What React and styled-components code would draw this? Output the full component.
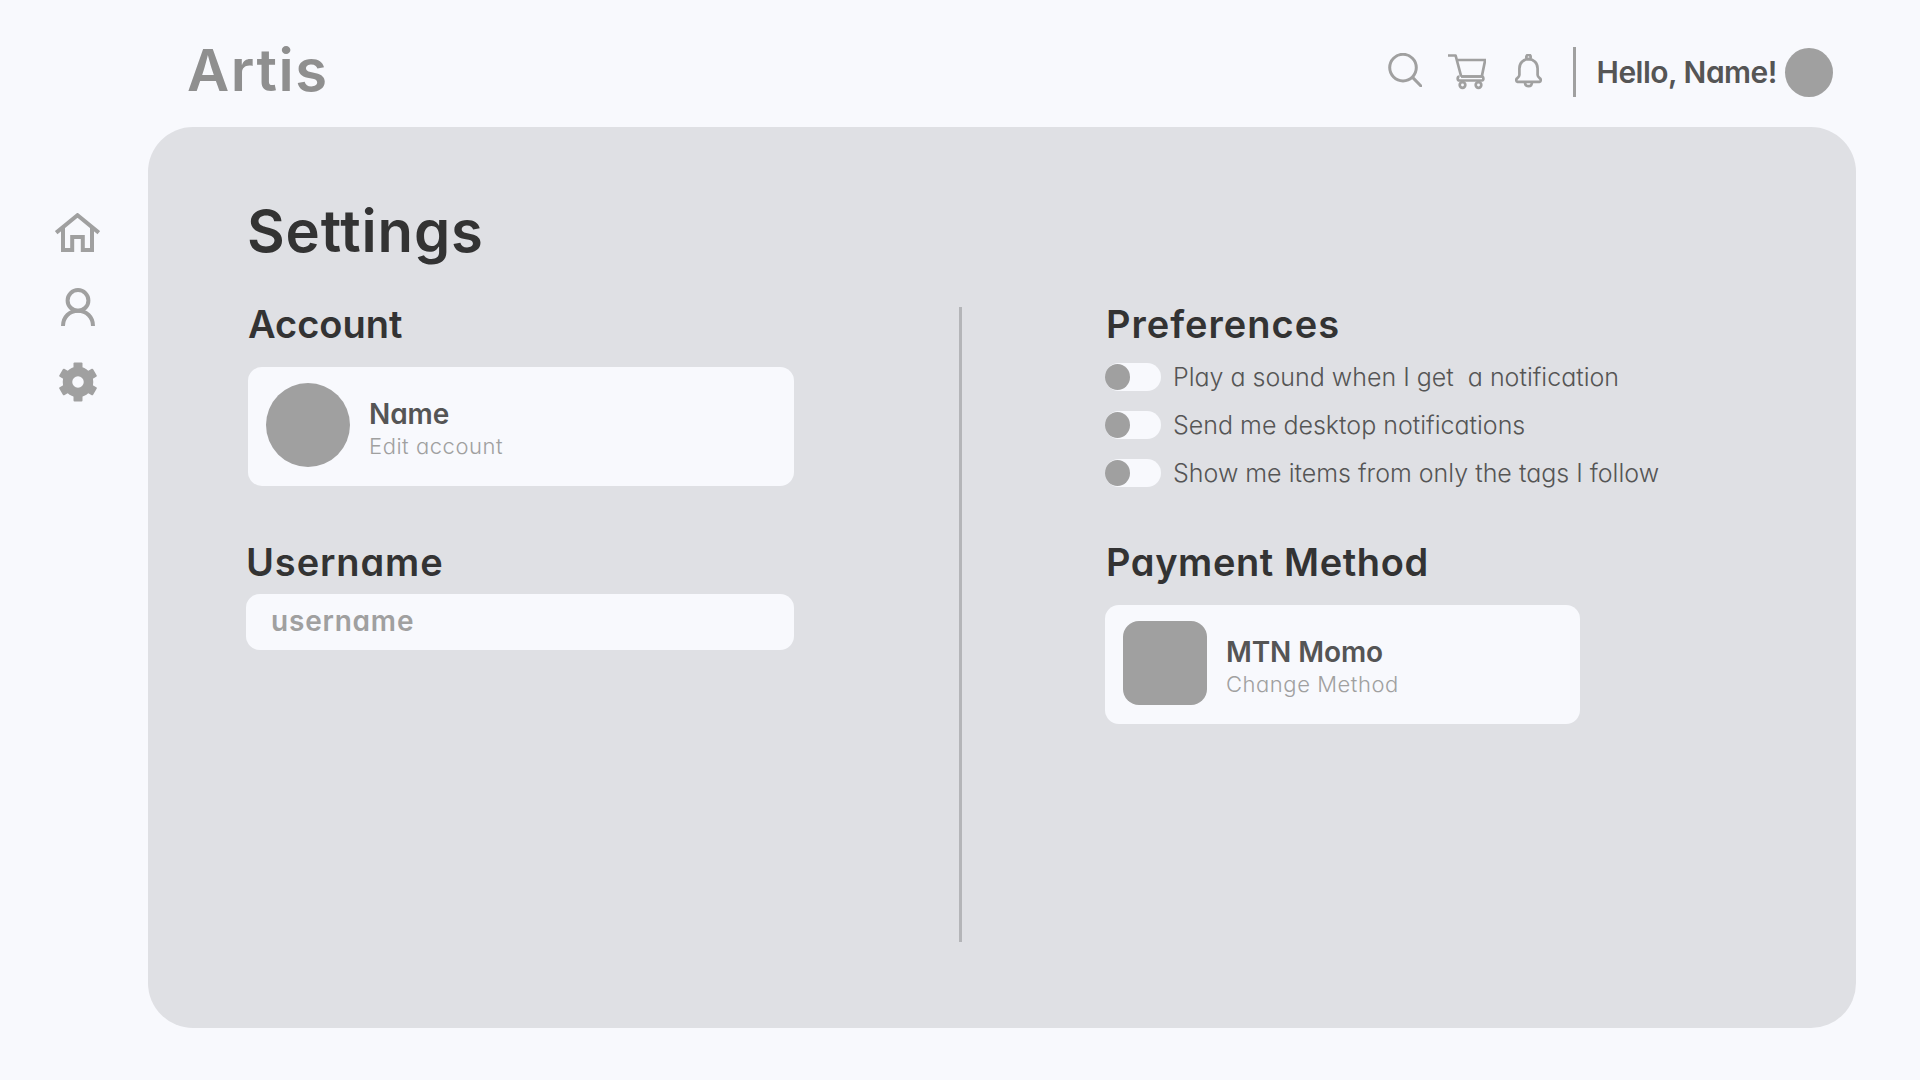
import React from 'react';
import styled, { createGlobalStyle } from 'styled-components';

const GlobalStyle = createGlobalStyle`
  html, body {
    margin: 0;
    padding: 0;
    background: #f8f9fd;
  }
  body {
    font-family: Inter, "Noto Sans", "Liberation Sans", sans-serif;
    font-feature-settings: "cv11" 1;
  }
  * {
    box-sizing: border-box;
  }
`;

const Page = styled.div`
  width: 1920px;
  height: 1080px;
  overflow: hidden;
  background: #f8f9fd;
`;

const Header = styled.header`
  height: 127px;
  padding: 41px 87px 0 187px;
  display: flex;
  justify-content: space-between;
  align-items: flex-start;
`;

const Logo = styled.div`
  font-size: 58px;
  line-height: 58px;
  font-weight: 600;
  letter-spacing: 1.6px;
  color: #8f8f8f;
`;

const HeaderTools = styled.div`
  height: 62px;
  display: flex;
  align-items: center;
`;

const ToolIcon = styled.svg`
  display: block;
  flex: none;
  margin-left: ${({ $gap }) => $gap || 0}px;
  margin-bottom: ${({ $lift }) => ($lift || 0) * 2}px;
  fill: none;
  stroke: #a0a0a0;
  stroke-width: ${({ $weight }) => $weight || 2.7};
`;

const ToolDivider = styled.div`
  width: 3px;
  height: 50px;
  margin: 0 21px 0 31px;
  background: #a0a0a0;
`;

const Greeting = styled.div`
  font-size: 30px;
  line-height: 36px;
  font-weight: 600;
  letter-spacing: -0.5px;
  color: #555555;
  white-space: nowrap;
`;

const HeaderAvatar = styled.div`
  width: 48px;
  height: 49px;
  margin-left: 8px;
  border-radius: 50%;
  background: #a0a0a0;
`;

const Body = styled.div`
  display: flex;
  align-items: flex-start;
`;

const Sidebar = styled.nav`
  width: 148px;
  padding: 86px 0 0 7px;
  display: flex;
  flex-direction: column;
  align-items: center;
  gap: 36px;
`;

const NavIcon = styled.svg`
  display: block;
  fill: none;
  stroke: #a0a0a0;
  stroke-width: 4;
`;

const Panel = styled.main`
  width: 1708px;
  height: 901px;
  padding: 75px 0 0 100px;
  border-radius: 45px;
  background: #dfe0e4;
`;

const Title = styled.h1`
  margin: 0 0 47px -1px;
  font-size: 58px;
  line-height: 58px;
  font-weight: 600;
  letter-spacing: 0.85px;
  color: #333333;
`;

const Columns = styled.div`
  height: 635px;
  display: flex;
  align-items: stretch;
`;

const LeftColumn = styled.section`
  width: 546px;
  margin-right: 165px;
`;

const ColumnRule = styled.div`
  width: 3px;
  margin-right: 143px;
  background: #b4b5b8;
`;

const RightColumn = styled.section`
  width: 600px;
`;

const Heading = styled.h2`
  margin: ${({ $top }) => $top || 0}px 0 ${({ $bottom }) => $bottom}px ${({ $indent }) => $indent || 0}px;
  font-size: 38px;
  line-height: 34px;
  font-weight: 600;
  letter-spacing: ${({ $track }) => $track}px;
  color: #333333;
`;

const Card = styled.div`
  width: ${({ $width }) => $width}px;
  height: 119px;
  padding: 0 18px 3px;
  display: flex;
  align-items: center;
  gap: 19px;
  border-radius: 14px;
  background: #f8f9fd;
`;

const Thumb = styled.div`
  width: 84px;
  height: 84px;
  flex: none;
  border-radius: ${({ $round }) => ($round ? '50%' : '16px')};
  background: #a0a0a0;
`;

const CardText = styled.div`
  margin-top: 7px;
`;

const CardTitle = styled.div`
  font-size: 28px;
  line-height: 32px;
  font-weight: 600;
  letter-spacing: -0.1px;
  color: #555555;
`;

const CardHint = styled.div`
  margin-top: 3px;
  font-size: 22px;
  line-height: 26px;
  font-weight: 300;
  letter-spacing: 0.55px;
  color: #a0a0a0;
`;

const UsernameField = styled.div`
  width: 548px;
  height: 56px;
  margin-left: -2px;
  padding: 0 25px 2px;
  display: flex;
  align-items: center;
  border-radius: 14px;
  background: #f8f9fd;
  font-size: 28px;
  font-weight: 600;
  letter-spacing: 0.8px;
  color: #a0a0a0;
`;

const ToggleList = styled.div`
  display: flex;
  flex-direction: column;
  gap: 20px;
`;

const ToggleRow = styled.label`
  height: 28px;
  display: flex;
  align-items: center;
  gap: 12px;
  font-size: 25px;
  line-height: 28px;
  font-weight: 300;
  color: #555555;
  white-space: pre;
`;

const ToggleTrack = styled.span`
  width: 56px;
  height: 28px;
  flex: none;
  display: flex;
  align-items: center;
  border-radius: 14px;
  background: #f8f9fd;
`;

const ToggleKnob = styled.span`
  width: 25px;
  height: 26px;
  border-radius: 50%;
  background: #a0a0a0;
`;

const preferences = [
  'Play a sound when I get  a notification',
  'Send me desktop notifications',
  'Show me items from only the tags I follow',
];

const Toggle = ({ label }) => (
  <ToggleRow>
    <ToggleTrack>
      <ToggleKnob />
    </ToggleTrack>
    {label}
  </ToggleRow>
);

const SearchIcon = () => (
  <ToolIcon $lift={2} $weight={3} width="34" height="34" viewBox="0 0 34 34">
    <circle cx="15" cy="14.6" r="13.3" />
    <path d="M24.8 24.6 33 33" strokeLinecap="round" />
  </ToolIcon>
);

const CartIcon = () => (
  <ToolIcon $gap={26} width="38" height="36" viewBox="0 0 38 36">
    <path d="M0 1.5h7.6l5.6 21M8.6 6h28.6l-3.4 16.5H13.2" strokeLinejoin="round" />
    <path d="M13 22.5h21c1.6 0 2 4 0 4H11.5c-2.4 0-2.4-4 0-4" strokeLinejoin="round" />
    <circle cx="14.5" cy="31" r="2.8" />
    <circle cx="30.5" cy="31" r="2.8" />
  </ToolIcon>
);

const BellIcon = () => (
  <ToolIcon $gap={29} $lift={1} width="27" height="34" viewBox="0 0 27 34">
    <circle cx="13.5" cy="3" r="2.2" />
    <path d="M4.4 21V14.5C4.4 9 8.4 5.2 13.5 5.2S22.6 9 22.6 14.5V21c0 1.6 1.4 2.6 2.6 3.6.8.7.8 3.2-.6 3.2H2.4c-1.4 0-1.4-2.5-.6-3.2C3 23.6 4.4 22.6 4.4 21Z" strokeLinejoin="round" />
    <path d="M10 28c0 5.6 7 5.6 7 0" />
  </ToolIcon>
);

const HomeIcon = () => (
  <NavIcon width="45" height="39" viewBox="0 0 45 39">
    <path d="M1.2 19.6 22.5 2.2l21.3 17.4" />
    <path d="M8 15v22h9.2V24h10.6v13H37V15" />
  </NavIcon>
);

const UserIcon = () => (
  <NavIcon width="34" height="38" viewBox="0 0 34 38">
    <circle cx="17" cy="12.4" r="10.4" />
    <path d="M2 38c0-9 6.6-15.2 15-15.2S32 29 32 38" />
  </NavIcon>
);

const GearIcon = () => (
  <svg width="38" height="40" viewBox="0 0 38 40" style={{ display: 'block' }}>
    <circle cx="19" cy="20" r="10.5" fill="none" stroke="#a0a0a0" strokeWidth="9.5" />
    {[0, 60, 120, 180, 240, 300].map((angle) => (
      <rect
        key={angle}
        x="14.5"
        y="0.5"
        width="9"
        height="8"
        rx="1"
        fill="#a0a0a0"
        transform={`rotate(${angle} 19 20)`}
      />
    ))}
  </svg>
);

export default function App() {
  return (
    <Page>
      <GlobalStyle />
      <Header>
        <Logo>Artis</Logo>
        <HeaderTools>
          <SearchIcon />
          <CartIcon />
          <BellIcon />
          <ToolDivider />
          <Greeting>Hello, Name!</Greeting>
          <HeaderAvatar />
        </HeaderTools>
      </Header>
      <Body>
        <Sidebar>
          <HomeIcon />
          <UserIcon />
          <GearIcon />
        </Sidebar>
        <Panel>
          <Title>Settings</Title>
          <Columns>
            <LeftColumn>
              <Heading $bottom={26} $track={0}>Account</Heading>
              <Card $width={546}>
                <Thumb $round />
                <CardText>
                  <CardTitle>Name</CardTitle>
                  <CardHint>Edit account</CardHint>
                </CardText>
              </Card>
              <Heading $top={59} $bottom={15} $indent={-2} $track={0.9}>Username</Heading>
              <UsernameField>username</UsernameField>
            </LeftColumn>
            <ColumnRule />
            <RightColumn>
              <Heading $bottom={22} $indent={1} $track={1}>Preferences</Heading>
              <ToggleList>
                {preferences.map((label) => (
                  <Toggle key={label} label={label} />
                ))}
              </ToggleList>
              <Heading $top={58} $bottom={26} $indent={1} $track={0.6}>Payment Method</Heading>
              <Card $width={475}>
                <Thumb />
                <CardText>
                  <CardTitle>MTN Momo</CardTitle>
                  <CardHint>Change Method</CardHint>
                </CardText>
              </Card>
            </RightColumn>
          </Columns>
        </Panel>
      </Body>
    </Page>
  );
}
